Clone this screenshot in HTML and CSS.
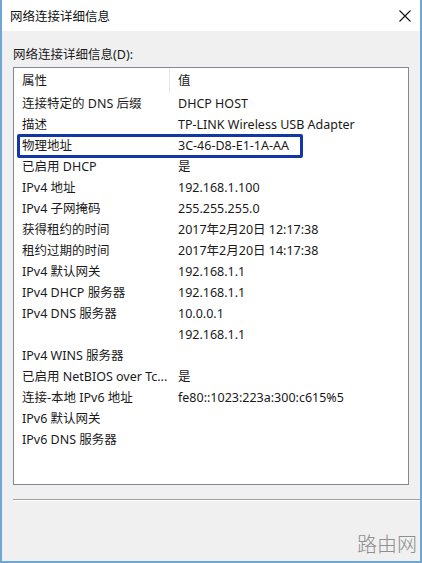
FILE: index.html
```html
<!DOCTYPE html>
<html lang="zh-CN">
<head>
<meta charset="utf-8">
<link rel="stylesheet" href="styles.css">
</head>
<body>
<div class="window">
  <div class="titlebar">
    <span class="title">网络连接详细信息</span>
    <svg class="close" width="12" height="12" viewBox="0 0 12 12"><path d="M0.5 0.5 L11.5 11.5 M11.5 0.5 L0.5 11.5" stroke="#111" stroke-width="1.1" fill="none"/></svg>
  </div>
  <div class="body">
    <div class="label">网络连接详细信息(D):</div>
    <div class="listbox">
      <div class="header">
        <div class="hcell first">属性</div>
        <div class="hcell">值</div>
      </div>
      <div class="rows">
        <div class="k">连接特定的 DNS 后缀</div><div class="v">DHCP HOST</div>
        <div class="k">描述</div><div class="v">TP-LINK Wireless USB Adapter</div>
        <div class="k">物理地址</div><div class="v">3C-46-D8-E1-1A-AA</div>
        <div class="k">已启用 DHCP</div><div class="v">是</div>
        <div class="k">IPv4 地址</div><div class="v">192.168.1.100</div>
        <div class="k">IPv4 子网掩码</div><div class="v">255.255.255.0</div>
        <div class="k">获得租约的时间</div><div class="v">2017年2月20日 12:17:38</div>
        <div class="k">租约过期的时间</div><div class="v">2017年2月20日 14:17:38</div>
        <div class="k">IPv4 默认网关</div><div class="v">192.168.1.1</div>
        <div class="k">IPv4 DHCP 服务器</div><div class="v">192.168.1.1</div>
        <div class="k">IPv4 DNS 服务器</div><div class="v">10.0.0.1</div>
        <div class="k"></div><div class="v">192.168.1.1</div>
        <div class="k">IPv4 WINS 服务器</div><div class="v"></div>
        <div class="k">已启用 NetBIOS over Tc...</div><div class="v">是</div>
        <div class="k">连接-本地 IPv6 地址</div><div class="v">fe80::1023:223a:300:c615%5</div>
        <div class="k">IPv6 默认网关</div><div class="v"></div>
        <div class="k">IPv6 DNS 服务器</div><div class="v"></div>
      </div>
      <div class="highlight"></div>
    </div>
    <div class="separator"></div>
    <div class="footer"><span class="watermark">路由网</span></div>
  </div>
</div>
</body>
</html>
```
FILE: styles.css
```css
html, body {
  margin: 0;
  padding: 0;
  background: #f0f0f0;
}
body {
  font-family: "Noto Sans", "Noto Sans CJK SC", sans-serif;
  font-size: 12.5px;
  color: #1a1a1a;
}
.window {
  width: 422px;
  height: 563px;
  box-sizing: border-box;
  border-left: 2px solid #6fa6d6;
  border-right: 2px solid #6fa6d6;
  border-bottom: 2px solid #6fa6d6;
  background: #f0f0f0;
  display: flex;
  flex-direction: column;
}
.titlebar {
  height: 31px;
  background: #ffffff;
  display: flex;
  align-items: center;
  justify-content: space-between;
  padding: 0 9px 0 8px;
  flex: none;
}
.title {
  font-family: "Noto Sans CJK SC", sans-serif;
  font-size: 12.5px;
  color: #111;
}
.close {
  display: block;
}
.body {
  flex: 1;
  display: flex;
  flex-direction: column;
  padding: 0 0 0 11px;
}
.label {
  margin-top: 14px;
  height: 22px;
  line-height: 20px;
  font-family: "Noto Sans", "Noto Sans CJK SC", sans-serif;
}
.listbox {
  position: relative;
  width: 396px;
  height: 418px;
  box-sizing: border-box;
  border: 1px solid #828790;
  background: #ffffff;
  flex: none;
}
.header {
  display: grid;
  grid-template-columns: 156px 1fr;
  height: 25px;
}
.hcell {
  padding-left: 8px;
  line-height: 25px;
}
.hcell.first {
  border-right: 1px solid #e5e5e5;
}
.rows {
  display: grid;
  grid-template-columns: 155px 1fr;
  grid-auto-rows: 21px;
  padding-left: 8px;
}
.k, .v {
  line-height: 21px;
  white-space: nowrap;
  overflow: hidden;
}
.v {
  padding-left: 1px;
}
.highlight {
  position: absolute;
  left: 3px;
  top: 66px;
  width: 286px;
  height: 24px;
  box-sizing: border-box;
  border: 3px solid #1238a6;
  border-radius: 2px;
}
.separator {
  margin-top: 14px;
  height: 0;
  border-top: 1px solid #a0a0a0;
  border-bottom: 1px solid #ffffff;
}
.footer {
  flex: 1;
  display: flex;
  justify-content: flex-end;
  align-items: flex-end;
  padding: 0 3px 3px 0;
}
.watermark {
  font-family: "Noto Sans CJK SC", sans-serif;
  font-size: 20px;
  font-weight: 300;
  color: #8e8e8e;
  letter-spacing: 0;
}
```
